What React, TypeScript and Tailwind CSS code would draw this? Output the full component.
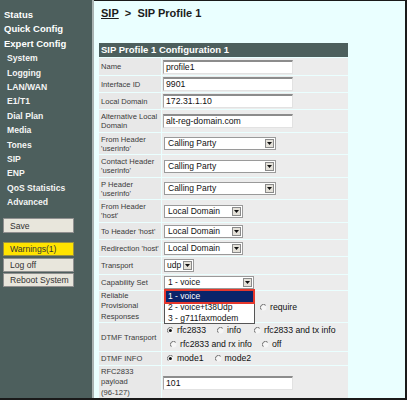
import React from "react";

function Radio({ checked = false }: { checked?: boolean }) {
  return (
    <svg width="7" height="7" viewBox="0 0 7 7" className="shrink-0">
      <circle cx="3.5" cy="3.5" r="3" fill="#f6f6f6" />
      <path d="M1.3 5.7 A3 3 0 0 1 5.7 1.3" stroke="#6a6a6a" strokeWidth="1" fill="none" />
      {checked && <circle cx="3.4" cy="3.4" r="1.5" fill="#111" />}
    </svg>
  );
}

function Input({ value }: { value: string }) {
  return (
    <div className="flex h-[14px] w-[130px] items-center border-t-2 border-l border-r border-b border-t-[#8c8c8c] border-l-[#a6a6a6] border-r-[#e2e2e2] border-b-[#e2e2e2] bg-white pl-[2px] text-[8.7px] leading-[11px] text-[#111]">
      {value}
    </div>
  );
}

function Arrow() {
  return (
    <div className="mr-[1px] flex h-[9px] w-[9px] shrink-0 items-center justify-center border border-[#8a8a8a] bg-[#e4e1d9]">
      <svg width="5" height="3" viewBox="0 0 5 3">
        <path d="M0 0 H5 L2.5 3 Z" fill="#111" />
      </svg>
    </div>
  );
}

function Select({ value, w, children, pad = "pl-[3px]" }: { value: string; w: string; children?: React.ReactNode; pad?: string }) {
  return (
    <div className={`relative ml-[1px] flex h-[13px] items-center justify-between border border-[#9a9a9a] bg-white ${w}`}>
      <span className={`${pad} whitespace-nowrap text-[8.5px] leading-[11px] text-[#111]`}>{value}</span>
      <Arrow />
      {children}
    </div>
  );
}

function Opt({ checked = false, label, cls = "" }: { checked?: boolean; label: string; cls?: string }) {
  return (
    <div className={`flex items-center ${cls}`}>
      <Radio checked={checked} />
      <span className="ml-[3px] whitespace-nowrap text-[8.7px] leading-[11px] text-[#111]">{label}</span>
    </div>
  );
}

type Row = { label: React.ReactNode; h: string; content: React.ReactNode; lead?: string };

export default function App() {
  const rows: Row[] = [
    { label: "Name", h: "h-[17px]", content: <Input value="profile1" /> },
    { label: "Interface ID", h: "h-[16px]", content: <Input value="9901" /> },
    { label: "Local Domain", h: "h-[16px]", content: <Input value="172.31.1.10" /> },
    {
      label: (
        <>
          Alternative Local
          <br />
          Domain
        </>
      ),
      h: "h-[22px]",
      content: <Input value="alt-reg-domain.com" />,
    },
    {
      label: (
        <>
          From Header
          <br />
          'userinfo'
        </>
      ),
      h: "h-[21px]",
      content: <Select value="Calling Party" w="w-[112px]" />,
    },
    {
      label: (
        <>
          Contact Header
          <br />
          'userinfo'
        </>
      ),
      h: "h-[22px]",
      content: <Select value="Calling Party" w="w-[112px]" />,
    },
    {
      label: (
        <>
          P Header
          <br />
          'userinfo'
        </>
      ),
      h: "h-[21px]",
      content: <Select value="Calling Party" w="w-[112px]" />,
    },
    {
      label: (
        <>
          From Header
          <br />
          'host'
        </>
      ),
      h: "h-[22px]",
      content: <Select value="Local Domain" w="w-[79px]" />,
    },
    { label: "To Header 'host'", h: "h-[16px]", content: <Select value="Local Domain" w="w-[79px]" /> },
    { label: "Redirection 'host'", h: "h-[16px]", content: <Select value="Local Domain" w="w-[79px]" /> },
    { label: "Transport", h: "h-[17px]", content: <Select value="udp" w="w-[30px]" pad="pl-[2px]" /> },
    {
      label: "Capability Set",
      h: "h-[15px]",
      content: (
        <Select value="1 - voice" w="w-[90px]">
          <div className="absolute left-[-1px] top-[13px] z-10 flex h-[34px] w-[91px] flex-col border border-[#555] bg-white">
            <div className="flex h-[11px] items-center bg-[#0a246a] pl-[3px] text-[8.5px] leading-[11px] text-white">1 - voice</div>
            <div className="flex h-[11px] items-center pl-[3px] text-[8.5px] leading-[11px] text-[#111]">2 - voice+t38Udp</div>
            <div className="flex h-[11px] items-center pl-[3px] text-[8.5px] leading-[11px] text-[#111]">3 - g711faxmodem</div>
          </div>
          <div className="absolute left-[-1px] top-[12px] z-20 h-[15px] w-[91px] border-2 border-[#e5382d]" />
        </Select>
      ),
    },
    {
      label: (
        <>
          Reliable
          <br />
          Provisional
          <br />
          Responses
        </>
      ),
      lead: "leading-[10.5px]",
      h: "h-[31px]",
      content: <Opt label="require" cls="ml-[97px] mt-[2px]" />,
    },
    {
      label: "DTMF Transport",
      h: "h-[28px]",
      content: (
        <div className="flex flex-col">
          <div className="flex h-[14px] items-center pl-[4px]">
            <Opt checked label="rfc2833" />
            <Opt label="info" cls="ml-[11px]" />
            <Opt label="rfc2833 and tx info" cls="ml-[13px]" />
          </div>
          <div className="flex h-[14px] items-center pl-[7px]">
            <Opt label="rfc2833 and rx info" />
            <Opt label="off" cls="ml-[10px]" />
          </div>
        </div>
      ),
    },
    {
      label: "DTMF INFO",
      h: "h-[13px]",
      content: (
        <div className="flex items-center pl-[4px]">
          <Opt checked label="mode1" />
          <Opt label="mode2" cls="ml-[11px]" />
        </div>
      ),
    },
    {
      label: (
        <>
          RFC2833
          <br />
          payload
          <br />
          (96-127)
        </>
      ),
      lead: "leading-[10.5px]",
      h: "h-[33px]",
      content: <Input value="101" />,
    },
  ];

  const top = ["Status", "Quick Config", "Expert Config"];
  const sub = ["System", "Logging", "LAN/WAN", "E1/T1", "Dial Plan", "Media", "Tones", "SIP", "ENP", "QoS Statistics", "Advanced"];

  return (
    <div className="flex h-[400px] w-[407px] overflow-hidden border-r-2 border-b-2 border-[#1a1a1a] font-['Liberation_Sans',Arial,sans-serif]">
      <div className="flex w-[92px] shrink-0 flex-col bg-[#4d5f5d] pt-[8px]">
        {top.map((t) => (
          <div key={t} className="h-[14.4px] pl-[4px] text-[9.5px] font-bold leading-[14.4px] text-white">
            {t}
          </div>
        ))}
        {sub.map((t) => (
          <div key={t} className="h-[14.4px] pl-[7px] text-[8.6px] font-bold leading-[14.4px] text-[#f4f4f4]">
            {t}
          </div>
        ))}
        <div className="ml-[3px] mt-[9px] flex w-[71px] flex-col">
          <div className="flex h-[15px] items-center border border-[#8f8f8f] bg-[#e8e6dc] pl-[6px] text-[8.6px] text-[#333]">Save</div>
          <div className="mt-[9px] flex h-[14px] items-center border border-[#9a8f40] bg-[#ffe300] pl-[6px] text-[8.6px] text-[#333]">Warnings(1)</div>
          <div className="mt-[2px] flex h-[14px] items-center border border-[#8f8f8f] bg-[#e8e6dc] pl-[6px] text-[8.6px] text-[#333]">Log off</div>
          <div className="mt-[1px] flex h-[14px] items-center border border-[#8f8f8f] bg-[#e8e6dc] pl-[6px] text-[8.6px] text-[#333]">Reboot System</div>
        </div>
      </div>
      <div className="w-[2px] shrink-0 bg-[#a9b3b2]" />
      <div className="flex-1 border-t border-[#1a1a1a] bg-[#eaffff] pl-[5px] pt-[6px]">
        <div className="pl-[2px] text-[11px] font-bold leading-[13px] text-[#1c1c1c]">
          <span className="underline">SIP</span>
          <span>&nbsp; &gt; &nbsp;SIP Profile 1</span>
        </div>
        <div className="mt-[23px] flex w-[249px] flex-col gap-[1px]">
          <div className="flex h-[14px] items-center bg-[#4d5f5d] pl-[2px] text-[9.5px] font-bold text-white">SIP Profile 1 Configuration 1</div>
          {rows.map((r, i) => (
            <div key={i} className="flex gap-[1px]">
              <div className={`flex w-[62px] shrink-0 items-center bg-[#e8e8e8] pl-[2px] text-[7.6px] text-[#3a3a3a] ${r.lead ?? "leading-[9px]"} ${r.h}`}>
                <div>{r.label}</div>
              </div>
              <div className={`flex flex-1 items-center bg-[#ececec] pl-[1px] ${r.h}`}>{r.content}</div>
            </div>
          ))}
        </div>
      </div>
    </div>
  );
}
